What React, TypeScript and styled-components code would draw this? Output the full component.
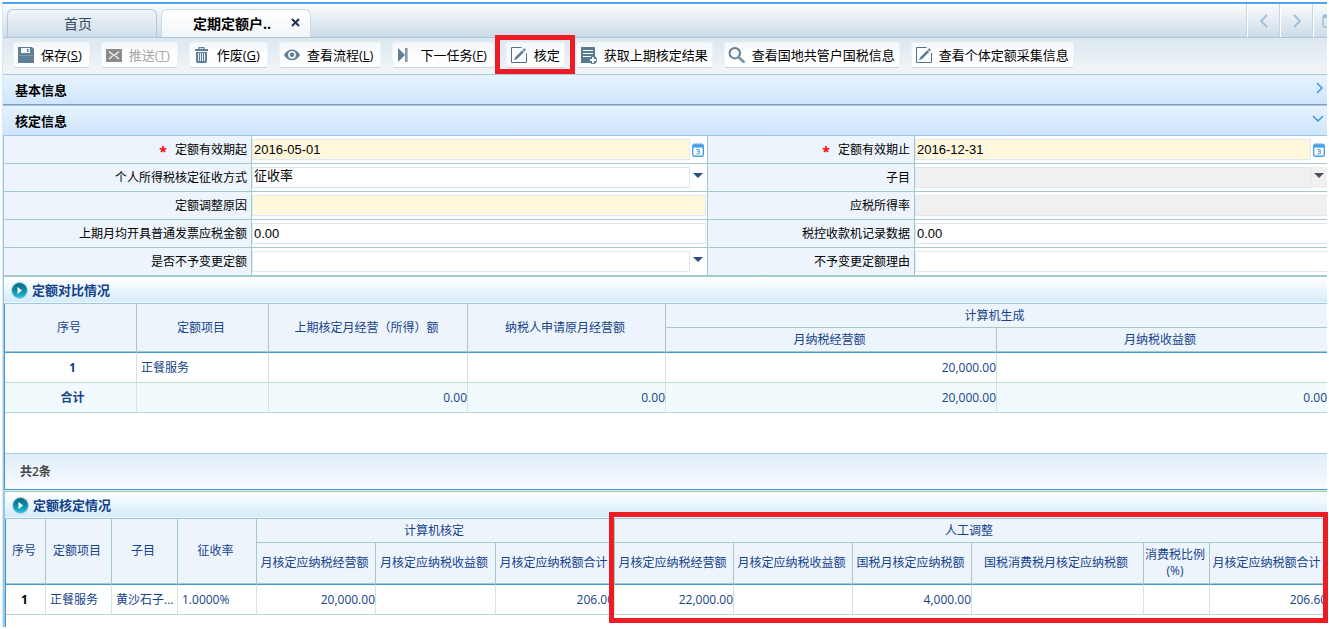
import React, { useState } from 'react';
import styled, { createGlobalStyle, css } from 'styled-components';

const GlobalStyle = createGlobalStyle`
  * { box-sizing: border-box; }
  body {
    margin: 0;
    background: #fff;
    font-family: "Open Sans", "Noto Sans CJK SC", sans-serif;
    font-size: 12px;
    line-height: 16px;
    color: #000;
  }
  button, input, select { font: inherit; color: inherit; margin: 0; border-radius: 0; }
  svg { flex: none; }
`;

const navy = '#15428b';
const grid = '#a5c9c6';
const sky = '#9fc6e0';
const strong = '#4398dc';

const Page = styled.div`
  display: flex;
  flex-direction: column;
  min-height: calc(100vh - 4px);
  margin: 2px 2px 0;
  border-top: 2px solid #4aa3f5;
  border-left: 1px solid #cfeafc;
`;

/* ---------- tabs ---------- */

const TabBar = styled.nav`
  display: flex;
  justify-content: space-between;
  height: 34px;
  background: linear-gradient(#fafcfd, #cddbe7);
  border-bottom: 1px solid #a9c6e3;
`;

const Tabs = styled.div`
  display: flex;
  gap: 4px;
  padding: 5px 0 0 4px;
`;

const Tab = styled.div<{ $active?: boolean }>`
  display: flex;
  align-items: center;
  width: 150px;
  height: 28px;
  border: 1px solid ${p => (p.$active ? '#c3dbf2' : '#b3c6da')};
  border-bottom: 0;
  border-radius: 6px 6px 0 0;
  background: ${p => (p.$active ? 'linear-gradient(#fff, #f1f6fa)' : 'linear-gradient(#f0f5f9, #cfdde9)')};
`;

const TabLink = styled.a<{ $active?: boolean }>`
  flex: 1;
  padding-left: ${p => (p.$active ? '31px' : '0')};
  padding-right: ${p => (p.$active ? '0' : '8px')};
  text-align: ${p => (p.$active ? 'left' : 'center')};
  font-size: 14px;
  line-height: 20px;
  font-weight: ${p => (p.$active ? 700 : 400)};
  color: ${p => (p.$active ? '#000' : '#33475f')};
  text-decoration: none;
  white-space: nowrap;
`;

const TabClose = styled.button`
  display: flex;
  padding: 0;
  margin: 0 10px 2px 0;
  border: 0;
  background: none;
`;

const TabNav = styled.div`
  display: flex;
`;

const TabNavButton = styled.button<{ $clipped?: boolean }>`
  display: flex;
  align-items: center;
  justify-content: ${p => (p.$clipped ? 'flex-start' : 'center')};
  width: ${p => (p.$clipped ? '14px' : '33px')};
  padding: 0 0 0 ${p => (p.$clipped ? '8px' : '0')};
  overflow: hidden;
  border: 0;
  border-left: 1px solid #fff;
  box-shadow: -1px 0 #c6d5e3;
  background: none;
`;

/* ---------- toolbar ---------- */

const Toolbar = styled.div`
  display: flex;
  gap: 11px;
  height: 37px;
  padding: 4px 0 0 10px;
  background: linear-gradient(#dce8ef, #f1f5f8);
  border-bottom: 1px solid #a9c6e3;
  white-space: nowrap;
`;

const ToolButton = styled.button<{ $hotkey: boolean }>`
  position: relative;
  display: flex;
  align-items: center;
  gap: 7px;
  flex: none;
  height: 26px;
  padding: 0 ${p => (p.$hotkey ? '7px' : '4px')} 0 4px;
  border: 1px solid #eef3f7;
  border-bottom-color: #d3d5d8;
  border-radius: 3px;
  background: linear-gradient(#f4f8fb, #fefefe 50%);
  font-size: 13px;
  line-height: 20px;
  &:disabled { color: #a5a5a5; }
`;

const Mark = styled.span`
  position: absolute;
  z-index: 2;
  inset: -8px -11px -7px -12px;
  border: 5px solid #ed1c24;
  pointer-events: none;
`;

const ColumnMark = styled(Mark)`
  inset: -7px -1px auto -6px;
  height: 111px;
`;

/* ---------- collapsible sections ---------- */

const SectionBar = styled.h2<{ $open?: boolean }>`
  margin: 0;
  border-bottom: 1px solid ${p => (p.$open ? sky : '#7b9bc4')};
  background: linear-gradient(#e7f3ff, #cfe5fc);
`;

const SectionToggle = styled.button<{ $open?: boolean }>`
  display: flex;
  align-items: center;
  justify-content: space-between;
  width: 100%;
  height: ${p => (p.$open ? '30px' : '29px')};
  padding: 0 ${p => (p.$open ? '3px' : '4px')} 0 12px;
  border: 0;
  border-top: ${p => (p.$open ? '1px solid #a9c8e4' : '0')};
  background: none;
  font-size: 13px;
  font-weight: 700;
  text-align: left;
  svg { margin-bottom: 4px; }
`;

/* ---------- form ---------- */

const Form = styled.form`
  display: grid;
  grid-template-columns: 248fr 456fr 207fr 412fr;
  grid-auto-rows: 28px;
  border-left: 1px solid ${sky};
  border-bottom: 1px solid ${grid};
`;

const Label = styled.label`
  display: flex;
  align-items: center;
  justify-content: flex-end;
  gap: 8px;
  padding-right: 4px;
  border-right: 1px solid ${grid};
  border-bottom: 1px solid ${grid};
  background: #edf4fc;
  white-space: nowrap;
`;

const Required = styled.span`
  color: #f00;
  font-weight: 700;
  font-size: 14px;
  line-height: 12px;
  padding-top: 4px;
`;

const Field = styled.div<{ $last?: boolean }>`
  display: flex;
  align-items: center;
  min-width: 0;
  padding-right: ${p => (p.$last ? 0 : '1px')};
  border-right: ${p => (p.$last ? 0 : `1px solid ${grid}`)};
  border-bottom: 1px solid ${grid};
  input:last-child { border-right-width: ${p => (p.$last ? 0 : '1px')}; }
`;

type Tone = 'plain' | 'cream' | 'grey';
const tones: Record<Tone, string> = { plain: '#fff', cream: '#fff8dc', grey: '#f0f0f0' };

const box = css<{ $tone: Tone }>`
  flex: 1;
  min-width: 0;
  width: 0;
  height: 21px;
  padding: 0 1px;
  border: 1px solid #dce8f2;
  background: ${p => tones[p.$tone]};
  font-family: "Liberation Sans", "Noto Sans CJK SC", sans-serif;
  font-size: 13px;
  outline: 0;
`;

const TextBox = styled.input`${box}`;

const Select = styled.select`
  ${box}
  appearance: none;
  padding: 0 1px 3px;
  opacity: 1;
`;

const Caret = styled.span<{ $tone: Tone }>`
  display: flex;
  align-items: center;
  justify-content: center;
  width: 16px;
  height: 21px;
  padding-bottom: 4px;
  background: ${p => tones[p.$tone]};
`;

const PickButton = styled.button`
  display: flex;
  align-items: center;
  justify-content: center;
  width: 16px;
  height: 21px;
  padding: 0;
  border: 0;
  background: none;
`;

/* ---------- data panels ---------- */

const Panel = styled.section<{ $inset?: boolean }>`
  display: flex;
  flex-direction: column;
  flex: ${p => (p.$inset ? '1' : 'none')};
  border-left: ${p => (p.$inset ? '2px' : '1px')} solid ${sky};
`;

const PanelTitle = styled.h3`
  display: flex;
  align-items: center;
  gap: 4px;
  height: 27px;
  margin: 0;
  padding-left: 7px;
  background: linear-gradient(#fff, #d3ebfa);
  border-bottom: 1px solid ${sky};
  box-shadow: inset 0 -1px #f3faff;
  font-size: 13px;
  font-weight: 700;
  line-height: 20px;
  color: ${navy};
`;

const GridBody = styled.div`
  flex: 1;
  border-left: 1px solid ${strong};
`;

const Table = styled.table`
  width: 100%;
  table-layout: fixed;
  border-collapse: separate;
  border-spacing: 0;
  color: ${navy};
`;

const HeadCell = styled.th<{ $tall?: boolean }>`
  position: relative;
  height: ${p => (p.$tall ? '41px' : '24px')};
  padding: 0 3px 0 0;
  border-right: 1px solid ${grid};
  border-bottom: 1px solid ${grid};
  background: #edf4fc;
  font-weight: 400;
  &:last-child { border-right: 0; padding-right: 4px; }
`;

const BodyRow = styled.tr<{ $total?: boolean }>`
  height: 30px;
  background: ${p => (p.$total ? '#f1fafd' : '#fff')};
  &:first-child { height: 31px; }
  &:first-child > * { border-top: 1px solid ${strong}; }
`;

const Cell = styled.td<{ $num?: boolean }>`
  padding: ${p => (p.$num ? '0' : '0 0 0 4px')};
  border-right: 1px solid #d5e3e0;
  border-bottom: 1px solid #bcd8d5;
  text-align: ${p => (p.$num ? 'right' : 'left')};
  white-space: nowrap;
  overflow: hidden;
  &:last-child { border-right: 0; }
`;

const RowHead = styled.th<{ $dark?: boolean }>`
  padding: ${p => (p.$dark ? '0 2px 0 0' : '0 0 0 4px')};
  border-right: 1px solid #d5e3e0;
  border-bottom: 1px solid #bcd8d5;
  color: ${p => (p.$dark ? '#000' : navy)};
`;

const Footer = styled.footer`
  display: flex;
  align-items: center;
  height: 37px;
  margin-top: 40px;
  padding-left: 15px;
  border-top: 1px solid #a9c8e4;
  border-bottom: 1px solid ${strong};
  background: linear-gradient(#e1edf9, #f7fbff);
  font-weight: 600;
  color: #444;
`;

const PanelGap = styled.div`
  height: 2px;
  border-left: 1px solid ${sky};
  border-bottom: 1px solid ${grid};
  background: #dcebf0;
`;

/* ---------- icons ---------- */

const steel = '#5f7f96';

const SaveIcon = () => (
  <svg width="16" height="16" viewBox="0 0 16 16">
    <path d="M0 0h14l2 2v14H0z" fill={steel} />
    <path d="M3 1h9v5H3z" fill="#f4f9fc" />
    <path d="M9 2h1.5v3H9z" fill={steel} />
    <path d="M1 8h14v1H1z" fill="#7d99ac" />
  </svg>
);

const PushIcon = () => (
  <svg width="16" height="13" viewBox="0 0 16 13">
    <path d="M0 0h16v13H0z" fill="#8b8b8b" />
    <path d="M3 2.5l5 4 5-4M3 10l3.5-3M13 10L9.5 7" fill="none" stroke="#f0f0f0" strokeWidth="1.4" />
  </svg>
);

const TrashIcon = () => (
  <svg width="13" height="16" viewBox="0 0 13 16">
    <path d="M4 2V.6h5V2" fill="none" stroke={steel} strokeWidth="1.2" />
    <path d="M0 2h13v2H0zM1 5h11v9.5l-1 1.5H2l-1-1.5z" fill={steel} />
    <path d="M3.5 6v8M5.5 6v8M7.5 6v8M9.5 6v8" stroke="#e8eff3" />
  </svg>
);

const EyeIcon = () => (
  <svg width="16" height="12" viewBox="0 0 16 12">
    <path d="M0 6C3.5-1.5 12.5-1.5 16 6 12.5 13 3.5 13 0 6z" fill={steel} />
    <circle cx="8" cy="5.8" r="3.9" fill="#f4f8fa" />
    <circle cx="8" cy="5.8" r="2.2" fill={steel} />
  </svg>
);

const NextIcon = () => (
  <svg width="16" height="14" viewBox="0 0 16 14">
    <path d="M1 0l7 7-7 7z" fill={steel} />
    <path d="M8 0h2.6v14H8z" fill="#7f9bb0" />
  </svg>
);

const EditIcon = () => (
  <svg width="16" height="16" viewBox="0 0 16 16">
    <path d="M10.5.5H.5v15h15V6" fill="none" stroke="#57707f" />
    <path d="M13.2 1.2l1.8 1.6-1.4 1.6-1.9-1.6zM11.2 3.3l1.9 1.7-7 7L3 13.2l1.2-3z" fill={steel} />
  </svg>
);

const FetchIcon = () => (
  <svg width="16" height="17" viewBox="0 0 16 17">
    <path d="M0 0h14v16H0z" fill="#587b91" />
    <path d="M2 3.5h10M2 6.5h10M2 9.5h10" stroke="#fff" />
    <circle cx="12" cy="13" r="4" fill="#587b91" />
    <path d="M12 10v6M9 13h6" stroke="#fff" strokeWidth="1.8" />
  </svg>
);

const SearchIcon = () => (
  <svg width="17" height="16" viewBox="0 0 17 16">
    <circle cx="6.8" cy="6.2" r="5.2" fill="#f5f9fb" stroke={steel} strokeWidth="2" />
    <path d="M10.6 10.2l5 4.6" stroke="#7795a9" strokeWidth="2.6" strokeLinecap="round" />
  </svg>
);

const Chevron = ({ dir, color }: { dir: 'left' | 'right' | 'down'; color: string }) => {
  const d = { left: 'M9 1L3 7l6 6', right: 'M3 1l6 6-6 6', down: 'M1 1l5 5 5-5' }[dir];
  return dir === 'down' ? (
    <svg width="12" height="8" viewBox="0 0 12 8"><path d={d} fill="none" stroke={color} strokeWidth="1.5" /></svg>
  ) : (
    <svg width="12" height="14" viewBox="0 0 12 14"><path d={d} fill="none" stroke={color} strokeWidth="1.8" /></svg>
  );
};

const SmallChevron = () => (
  <svg width="7" height="12" viewBox="0 0 7 12">
    <path d="M1 1l5 5-5 5" fill="none" stroke="#3c97de" strokeWidth="1.5" />
  </svg>
);

const WindowIcon = () => (
  <svg width="16" height="14" viewBox="0 0 16 14">
    <rect x="1" y="1" width="14" height="12" rx="2" fill="none" stroke="#9dbedd" strokeWidth="1.4" />
    <path d="M1 1h14v3H1z" fill="#9dbedd" />
  </svg>
);

const CloseIcon = () => (
  <svg width="9" height="9" viewBox="0 0 9 9">
    <path d="M1 1l7 7M8 1L1 8" stroke="#25355a" strokeWidth="2.1" />
  </svg>
);

const CalendarIcon = () => (
  <svg width="12" height="14" viewBox="0 0 12 14">
    <rect x=".7" y="1.5" width="10.6" height="11.8" rx="1.5" fill="#fff" stroke="#4a9fe3" strokeWidth="1.4" />
    <path d="M1 2h10v2.6H1z" fill="#4a9fe3" />
    <path d="M2.5 0v2M4.8 0v2M7.1 0v2M9.4 0v2" stroke="#7fbdf0" />
    <path d="M4.3 6.6h3v4.3h-3M5 8.7h2.3" fill="none" stroke="#5a9fd8" />
  </svg>
);

const CaretIcon = ({ color }: { color: string }) => (
  <svg width="10" height="5" viewBox="0 0 10 5"><path d="M0 0h10L5 5z" fill={color} /></svg>
);

const PlayIcon = () => (
  <svg width="17" height="17" viewBox="0 0 17 17">
    <defs>
      <linearGradient id="teal" x1="0" y1="0" x2="0" y2="1">
        <stop offset="0" stopColor="#0c6b86" />
        <stop offset=".5" stopColor="#0a8ba8" />
        <stop offset="1" stopColor="#25c3dc" />
      </linearGradient>
    </defs>
    <circle cx="8.5" cy="8.5" r="8.4" fill="#a9cfdc" />
    <circle cx="8.5" cy="8.5" r="7.4" fill="url(#teal)" />
    <path d="M6.5 5l4.5 3.5L6.5 12z" fill="#fff" />
  </svg>
);

const IconSlot = styled.span`
  display: flex;
  justify-content: center;
  width: 16px;
  flex: none;
`;

/* ---------- composition ---------- */

interface ToolProps {
  icon: React.ReactNode;
  text: string;
  hotkey?: string;
  disabled?: boolean;
  marked?: boolean;
}

const Tool = ({ icon, text, hotkey, disabled, marked }: ToolProps) => (
  <ToolButton type="button" disabled={disabled} $hotkey={Boolean(hotkey)}>
    <IconSlot>{icon}</IconSlot>
    <span>{text}{hotkey && <>(<u>{hotkey}</u>)</>}</span>
    {marked && <Mark />}
  </ToolButton>
);

interface FormFieldProps {
  id: string;
  label: string;
  kind?: 'text' | 'date' | 'select';
  value?: string;
  tone?: Tone;
  required?: boolean;
  last?: boolean;
}

const FormField = ({ id, label, kind = 'text', value = '', tone = 'plain', required, last }: FormFieldProps) => (
  <>
    <Label htmlFor={id}>
      {required && <Required>*</Required>}
      {label}
    </Label>
    <Field $last={last}>
      {kind === 'select' ? (
        <>
          <Select id={id} $tone={tone} disabled={tone === 'grey'} defaultValue={value}>
            <option>{value}</option>
          </Select>
          <Caret $tone={tone}><CaretIcon color={tone === 'grey' ? '#4a525e' : '#2a4d85'} /></Caret>
        </>
      ) : (
        <>
          <TextBox id={id} $tone={tone} disabled={tone === 'grey'} defaultValue={value} />
          {kind === 'date' && <PickButton type="button" aria-label={label}><CalendarIcon /></PickButton>}
        </>
      )}
    </Field>
  </>
);

const Columns = ({ widths }: { widths: number[] }) => (
  <colgroup>{widths.map((w, i) => <col key={i} style={{ width: w }} />)}</colgroup>
);

const compareWidths = [132, 132, 199, 198, 331, 330];
const assessWidths = [40, 66, 66, 79, 119, 120, 119, 119, 119, 119, 172, 66, 117];

const assessHeads = [
  '月核定应纳税经营额', '月核定应纳税收益额', '月核定应纳税额合计',
  '月核定应纳税经营额', '月核定应纳税收益额', '国税月核定应纳税额',
  '国税消费税月核定应纳税额', '消费税比例(%)', '月核定应纳税额合计',
];
const assessValues = ['20,000.00', '', '206.00', '22,000.00', '', '4,000.00', '', '', '206.60'];

export default function App() {
  const [basicOpen, setBasicOpen] = useState(false);
  return (
    <>
      <GlobalStyle />
      <Page>
        <TabBar>
          <Tabs>
            <Tab><TabLink href="#home">首页</TabLink></Tab>
            <Tab $active>
              <TabLink $active href="#quota">定期定额户..</TabLink>
              <TabClose type="button" aria-label="关闭"><CloseIcon /></TabClose>
            </Tab>
          </Tabs>
          <TabNav>
            <TabNavButton type="button" aria-label="向左"><Chevron dir="left" color="#9dbedd" /></TabNavButton>
            <TabNavButton type="button" aria-label="向右"><Chevron dir="right" color="#9dbedd" /></TabNavButton>
            <TabNavButton type="button" aria-label="窗口" $clipped><WindowIcon /></TabNavButton>
          </TabNav>
        </TabBar>

        <Toolbar>
          <Tool icon={<SaveIcon />} text="保存" hotkey="S" />
          <Tool icon={<PushIcon />} text="推送" hotkey="T" disabled />
          <Tool icon={<TrashIcon />} text="作废" hotkey="G" />
          <Tool icon={<EyeIcon />} text="查看流程" hotkey="L" />
          <Tool icon={<NextIcon />} text="下一任务" hotkey="F" />
          <Tool icon={<EditIcon />} text="核定" marked />
          <Tool icon={<FetchIcon />} text="获取上期核定结果" />
          <Tool icon={<SearchIcon />} text="查看国地共管户国税信息" />
          <Tool icon={<EditIcon />} text="查看个体定额采集信息" />
        </Toolbar>

        <SectionBar>
          <SectionToggle type="button" aria-expanded={basicOpen} onClick={() => setBasicOpen(!basicOpen)}>
            基本信息<SmallChevron />
          </SectionToggle>
        </SectionBar>
        <SectionBar $open>
          <SectionToggle $open type="button" aria-expanded>
            核定信息<Chevron dir="down" color="#3c97de" />
          </SectionToggle>
        </SectionBar>

        <Form>
          <FormField id="from" label="定额有效期起" kind="date" value="2016-05-01" tone="cream" required />
          <FormField id="to" label="定额有效期止" kind="date" value="2016-12-31" tone="cream" required last />
          <FormField id="method" label="个人所得税核定征收方式" kind="select" value="征收率" />
          <FormField id="item" label="子目" kind="select" tone="grey" last />
          <FormField id="reason" label="定额调整原因" tone="cream" />
          <FormField id="rate" label="应税所得率" tone="grey" last />
          <FormField id="invoice" label="上期月均开具普通发票应税金额" value="0.00" />
          <FormField id="register" label="税控收款机记录数据" value="0.00" last />
          <FormField id="keep" label="是否不予变更定额" kind="select" />
          <FormField id="keepReason" label="不予变更定额理由" last />
        </Form>

        <Panel>
          <PanelTitle><PlayIcon />定额对比情况</PanelTitle>
          <GridBody>
            <Table>
              <Columns widths={compareWidths} />
              <thead>
                <tr>
                  <HeadCell rowSpan={2}>序号</HeadCell>
                  <HeadCell rowSpan={2}>定额项目</HeadCell>
                  <HeadCell rowSpan={2}>上期核定月经营（所得）额</HeadCell>
                  <HeadCell rowSpan={2}>纳税人申请原月经营额</HeadCell>
                  <HeadCell colSpan={2}>计算机生成</HeadCell>
                </tr>
                <tr>
                  <HeadCell>月纳税经营额</HeadCell>
                  <HeadCell>月纳税收益额</HeadCell>
                </tr>
              </thead>
              <tbody>
                <BodyRow>
                  <RowHead scope="row">1</RowHead>
                  <Cell>正餐服务</Cell>
                  <Cell /><Cell />
                  <Cell $num>20,000.00</Cell>
                  <Cell />
                </BodyRow>
                <BodyRow $total>
                  <RowHead scope="row">合计</RowHead>
                  <Cell />
                  <Cell $num>0.00</Cell>
                  <Cell $num>0.00</Cell>
                  <Cell $num>20,000.00</Cell>
                  <Cell $num>0.00</Cell>
                </BodyRow>
              </tbody>
            </Table>
            <Footer>共2条</Footer>
          </GridBody>
        </Panel>

        <PanelGap />

        <Panel $inset>
          <PanelTitle><PlayIcon />定额核定情况</PanelTitle>
          <GridBody>
            <Table>
              <Columns widths={assessWidths} />
              <thead>
                <tr>
                  <HeadCell rowSpan={2}>序号</HeadCell>
                  <HeadCell rowSpan={2}>定额项目</HeadCell>
                  <HeadCell rowSpan={2}>子目</HeadCell>
                  <HeadCell rowSpan={2}>征收率</HeadCell>
                  <HeadCell colSpan={3}>计算机核定</HeadCell>
                  <HeadCell colSpan={6}>人工调整<ColumnMark /></HeadCell>
                </tr>
                <tr>
                  {assessHeads.map((h, i) => <HeadCell key={i} $tall>{h}</HeadCell>)}
                </tr>
              </thead>
              <tbody>
                <BodyRow>
                  <RowHead scope="row" $dark>1</RowHead>
                  <Cell>正餐服务</Cell>
                  <Cell>黄沙石子...</Cell>
                  <Cell>1.0000%</Cell>
                  {assessValues.map((v, i) => <Cell key={i} $num>{v}</Cell>)}
                </BodyRow>
              </tbody>
            </Table>
          </GridBody>
        </Panel>
      </Page>
    </>
  );
}
